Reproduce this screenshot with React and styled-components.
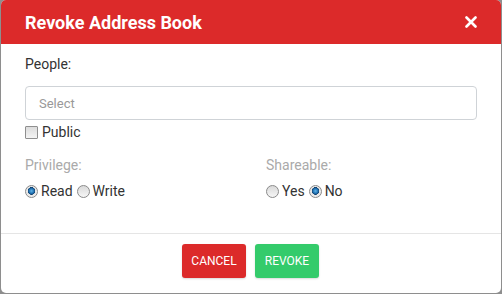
import React, { useState } from 'react';
import styled, { createGlobalStyle } from 'styled-components';

const GlobalStyle = createGlobalStyle`
  html, body {
    margin: 0;
    padding: 0;
    background: #8e8e8e;
    font-family: Roboto, "Liberation Sans", Arial, sans-serif;
  }
`;

const Backdrop = styled.div`
  width: 502px;
  height: 294px;
  padding: 0 1px 1px 1px;
  box-sizing: border-box;
`;

const Modal = styled.div`
  width: 500px;
  height: 293px;
  background: #fff;
  border-radius: 5px;
  overflow: hidden;
  display: flex;
  flex-direction: column;
`;

const Header = styled.div`
  height: 44px;
  flex-shrink: 0;
  background: #dc2a2a;
  display: flex;
  align-items: center;
  justify-content: space-between;
  padding: 0 24px;
  color: #fff;
`;

const Title = styled.h4`
  margin: 0;
  font-size: 18px;
  font-weight: 700;
`;

const Close = styled.button`
  border: 0;
  background: none;
  padding: 0;
  color: #fff;
  cursor: pointer;
  display: flex;
`;

const Body = styled.div`
  flex: 1;
  padding: 12px 24px 0 24px;
  border-bottom: 1px solid #e5e5e5;
`;

const Label = styled.div`
  font-size: 14px;
  color: ${(p) => (p.muted ? '#aaaaaa' : '#333')};
  line-height: 16px;
  margin-bottom: ${(p) => p.gap || 0}px;
`;

const Input = styled.div`
  height: 34px;
  box-sizing: border-box;
  border: 1px solid #cfd3d7;
  border-radius: 4px;
  display: flex;
  align-items: center;
  padding: 0 13px;
  font-size: 13px;
  color: #999;
`;

const CheckRow = styled.label`
  display: flex;
  align-items: center;
  gap: 4px;
  font-size: 14px;
  color: #333;
  margin-top: 3px;
  height: 18px;
`;

const Box = styled.span`
  width: 11px;
  height: 11px;
  border: 1px solid #8f8f8f;
  border-radius: 1px;
  background: linear-gradient(#dcdcdc, #f4f4f4);
`;

const Columns = styled.div`
  display: grid;
  grid-template-columns: 241px 1fr;
  margin-top: 16px;
`;

const Options = styled.div`
  display: flex;
  align-items: center;
  margin-top: 10px;
  font-size: 14px;
  color: #333;
`;

const Option = styled.label`
  display: flex;
  align-items: center;
  gap: 3px;
  margin-right: 4px;
  cursor: pointer;
`;

const Dot = styled.span`
  width: 11px;
  height: 11px;
  border-radius: 50%;
  border: 1px solid #8a8a8a;
  box-sizing: content-box;
  background: ${(p) =>
    p.on
      ? 'radial-gradient(circle at 50% 45%, #5fb4e8 0, #1f6fb0 2.5px, #123f6a 3.6px, #e6e6e6 4px, #f7f7f7 100%)'
      : 'linear-gradient(#d9d9d9, #f6f6f6)'};
`;

const Footer = styled.div`
  height: 59px;
  flex-shrink: 0;
  display: flex;
  align-items: flex-start;
  justify-content: center;
  gap: 9px;
  padding: 10px 1px 0 0;
  box-sizing: border-box;
`;

const Button = styled.button`
  height: 34px;
  width: 64px;
  padding: 0;
  border: 0;
  border-radius: 3px;
  background: ${(p) => p.color};
  color: #fff;
  font-family: inherit;
  font-size: 12px;
  text-transform: uppercase;
  box-shadow: 0 1px 2px rgba(0, 0, 0, 0.15);
  cursor: pointer;
`;

const Radio = ({ on, label, onClick }) => (
  <Option onClick={onClick}>
    <Dot on={on} />
    {label}
  </Option>
);

export default function App() {
  const [privilege, setPrivilege] = useState('read');
  const [shareable, setShareable] = useState('no');

  return (
    <Backdrop>
      <GlobalStyle />
      <Modal>
        <Header>
          <Title>Revoke Address Book</Title>
          <Close aria-label="Close">
            <svg width="12" height="12" viewBox="0 0 12 12">
              <path d="M1.5 1.5 L10.5 10.5 M10.5 1.5 L1.5 10.5" stroke="#fff" strokeWidth="2.6" strokeLinecap="round" />
            </svg>
          </Close>
        </Header>
        <Body>
          <Label gap={14}>People:</Label>
          <Input>Select</Input>
          <CheckRow>
            <Box />
            Public
          </CheckRow>
          <Columns>
            <div>
              <Label muted>Privilege:</Label>
              <Options>
                <Radio on={privilege === 'read'} label="Read" onClick={() => setPrivilege('read')} />
                <Radio on={privilege === 'write'} label="Write" onClick={() => setPrivilege('write')} />
              </Options>
            </div>
            <div>
              <Label muted>Shareable:</Label>
              <Options>
                <Radio on={shareable === 'yes'} label="Yes" onClick={() => setShareable('yes')} />
                <Radio on={shareable === 'no'} label="No" onClick={() => setShareable('no')} />
              </Options>
            </div>
          </Columns>
        </Body>
        <Footer>
          <Button color="#dc2a2a">Cancel</Button>
          <Button color="#34cb6b">Revoke</Button>
        </Footer>
      </Modal>
    </Backdrop>
  );
}
